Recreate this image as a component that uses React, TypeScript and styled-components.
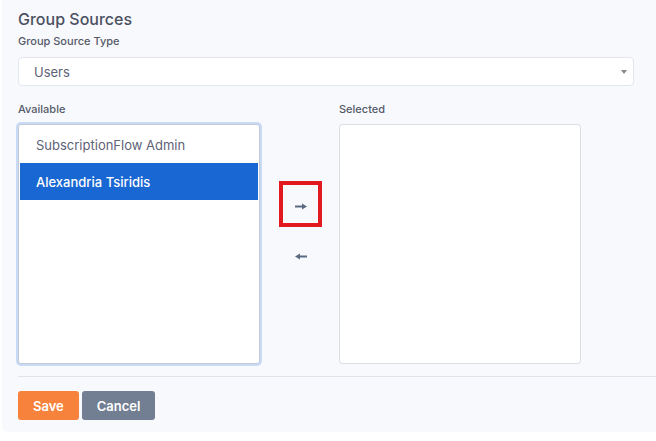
import React from 'react';
import styled, { createGlobalStyle } from 'styled-components';

const GlobalStyle = createGlobalStyle`
  html, body {
    margin: 0;
    padding: 0;
    background: #fff;
  }
  body {
    font-family: Inter, "Noto Sans", "Liberation Sans", sans-serif;
  }
`;

const Card = styled.div`
  margin-left: 2px;
  height: 432px;
  box-sizing: border-box;
  padding: 8px 0 0 16px;
  background-color: #f8f9fd;
  border-radius: 0 0 0 6px;
`;

const Title = styled.h3`
  margin: 0;
  font-size: 16px;
  line-height: 22px;
  font-weight: 500;
  color: #4b5060;
`;

const Label = styled.div`
  font-size: 11px;
  line-height: 16px;
  font-weight: 500;
  color: #555a68;
`;

const TypeLabel = styled(Label)`
  margin-top: 3px;
`;

const Select = styled.div`
  margin-top: 8px;
  width: 616px;
  height: 29px;
  box-sizing: border-box;
  background-color: #fff;
  border: 1px solid #e4e6ef;
  border-radius: 4px;
  display: flex;
  align-items: center;
  justify-content: space-between;
  padding: 0 6px 0 15px;
  font-size: 13px;
  color: #5e6278;
`;

const Caret = styled.span`
  width: 0;
  height: 0;
  border-left: 3px solid transparent;
  border-right: 3px solid transparent;
  border-top: 4px solid #888;
`;

const Lists = styled.div`
  margin-top: 15px;
  display: flex;
  align-items: flex-start;
`;

const Column = styled.div`
  display: flex;
  flex-direction: column;
  gap: 7px;
`;

const ListBox = styled.div<{ $focused?: boolean }>`
  width: 242px;
  height: 240px;
  box-sizing: border-box;
  background-color: #fff;
  border: 1px solid ${(p) => (p.$focused ? '#c3cad6' : '#dcdde4')};
  border-radius: 3px;
  padding: 1px;
  box-shadow: ${(p) => (p.$focused ? '0 0 0 2px #c8daf6' : 'none')};
`;

const Option = styled.div<{ $active?: boolean }>`
  height: 37px;
  display: flex;
  align-items: center;
  padding-left: 16px;
  font-size: 13px;
  color: ${(p) => (p.$active ? '#fff' : '#5e6278')};
  background-color: ${(p) => (p.$active ? '#1967d2' : 'transparent')};
  font-weight: ${(p) => (p.$active ? 500 : 400)};
`;

const Arrows = styled.div`
  width: 79px;
  display: flex;
  flex-direction: column;
  align-items: center;
  padding-top: 80px;
  gap: 4px;
`;

const ArrowButton = styled.button<{ $outlined?: boolean }>`
  width: 43px;
  height: 46px;
  box-sizing: border-box;
  margin-left: 2px;
  padding: 4px 0 0 0;
  display: flex;
  align-items: center;
  justify-content: center;
  background: transparent;
  border: 4px solid ${(p) => (p.$outlined ? '#e2191e' : 'transparent')};
  cursor: pointer;
`;

const Divider = styled.hr`
  margin: 12px 0 0 0;
  border: 0;
  border-top: 1px solid #e1e3ea;
`;

const Actions = styled.div`
  margin-top: 14px;
  display: flex;
  gap: 3px;
`;

const Button = styled.button<{ $variant: 'save' | 'cancel' }>`
  height: 29px;
  padding: 0 15px;
  border: 0;
  border-radius: 3px;
  font-family: inherit;
  font-size: 13px;
  font-weight: 600;
  color: #fff;
  background-color: ${(p) => (p.$variant === 'save' ? '#f6823c' : '#727e92')};
`;

const Arrow = ({ dir }: { dir: 'left' | 'right' }) => (
  <svg width="12" height="7" viewBox="0 0 12 7" style={{ transform: dir === 'left' ? 'scaleX(-1)' : undefined }}>
    <path d="M0 3.5 H8" stroke="#5a6a80" strokeWidth="2" />
    <path d="M7 0.5 L12 3.5 L7 6.5 Z" fill="#5a6a80" />
  </svg>
);

export default function App() {
  return (
    <>
      <GlobalStyle />
      <Card>
        <Title>Group Sources</Title>
        <TypeLabel>Group Source Type</TypeLabel>
        <Select>
          <span>Users</span>
          <Caret />
        </Select>
        <Lists>
          <Column>
            <Label>Available</Label>
            <ListBox $focused>
              <Option>SubscriptionFlow Admin</Option>
              <Option $active>Alexandria Tsiridis</Option>
            </ListBox>
          </Column>
          <Arrows>
            <ArrowButton $outlined>
              <Arrow dir="right" />
            </ArrowButton>
            <ArrowButton>
              <Arrow dir="left" />
            </ArrowButton>
          </Arrows>
          <Column>
            <Label>Selected</Label>
            <ListBox />
          </Column>
        </Lists>
        <Divider />
        <Actions>
          <Button $variant="save">Save</Button>
          <Button $variant="cancel">Cancel</Button>
        </Actions>
      </Card>
    </>
  );
}
